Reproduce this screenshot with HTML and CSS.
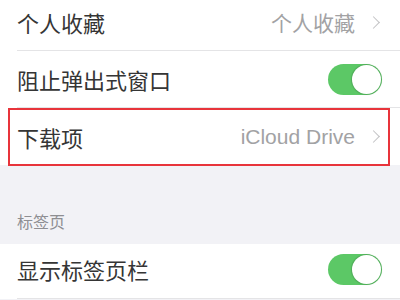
FILE: index.html
```html
<!DOCTYPE html>
<html lang="zh-CN">
<head>
    <meta charset="UTF-8">
    <meta name="viewport" content="width=device-width, initial-scale=1.0">
    <title>Safari 设置</title>
    <link rel="stylesheet" href="styles.css">
</head>
<body>

    <div class="group">
        <div class="row row-first">
            <span class="label">个人收藏</span>
            <span class="value">个人收藏<span class="chevron"></span></span>
        </div>
        <div class="row">
            <span class="label">阻止弹出式窗口</span>
            <span class="switch on"><span class="knob"></span></span>
        </div>
        <div class="row row-last marked">
            <span class="label">下载项</span>
            <span class="value value-latin">iCloud Drive<span class="chevron"></span></span>
        </div>
    </div>

    <div class="section-head">标签页</div>

    <div class="group">
        <div class="row row-bottom">
            <span class="label">显示标签页栏</span>
            <span class="switch on"><span class="knob"></span></span>
        </div>
    </div>

</body>
</html>
```

FILE: styles.css
```css
body {
    margin: 0;
    background: #f2f2f6;
    font-family: "Noto Sans CJK SC", "Noto Sans", sans-serif;
    color: #353535;
}
.group {
    background: white;
    padding-left: 17px;
}
.row {
    position: relative;
    display: flex;
    justify-content: space-between;
    align-items: center;
    height: 57px;
    padding-right: 18px;
    border-bottom: 1px solid #e4e4e6;
    box-sizing: border-box;
}
.row-first {
    height: 51px;
    padding-bottom: 6px;
}
.row-last {
    border-bottom: none;
}
.row-bottom {
    height: 55px;
    padding-bottom: 4px;
}
.label {
    font-size: 22px;
    line-height: 1;
}
.value {
    display: flex;
    align-items: center;
    font-size: 21px;
    line-height: 1;
    color: #a2a2a4;
}
.value-latin {
    font-family: "Liberation Sans", "Noto Sans", sans-serif;
    font-size: 21px;
}
.chevron {
    width: 8px;
    height: 8px;
    margin-left: 14px;
    margin-right: 4px;
    border-top: 1.5px solid #c2c2c4;
    border-right: 1.5px solid #c2c2c4;
    transform: rotate(45deg);
}
.switch {
    width: 54px;
    height: 31px;
    border-radius: 16px;
    background: #e6e6e8;
    display: flex;
    align-items: center;
    padding: 1px;
    box-sizing: border-box;
}
.switch.on {
    background: #5cc866;
    justify-content: flex-end;
}
.knob {
    width: 29px;
    height: 29px;
    border-radius: 50%;
    background: white;
    box-shadow: 0 0 1px 1px rgba(0, 0, 0, 0.14);
}
.marked::after {
    content: "";
    position: absolute;
    left: -9px;
    right: 10px;
    top: 0;
    bottom: -1px;
    border: 2px solid #e8343b;
}
.section-head {
    height: 79px;
    box-sizing: border-box;
    padding: 0 17px 11px;
    display: flex;
    align-items: flex-end;
    font-size: 16px;
    color: #8e8e92;
}
```
